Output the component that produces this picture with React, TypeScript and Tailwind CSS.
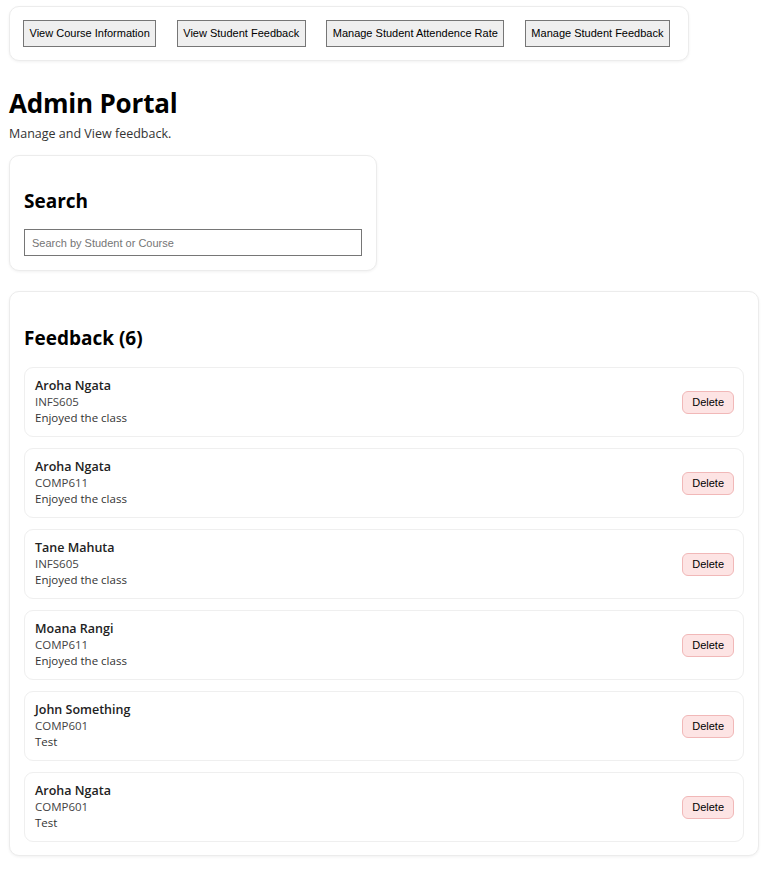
const navItems = [
  "View Course Information",
  "View Student Feedback",
  "Manage Student Attendence Rate",
  "Manage Student Feedback",
];

const feedback = [
  { name: "Aroha Ngata", course: "INFS605", text: "Enjoyed the class" },
  { name: "Aroha Ngata", course: "COMP611", text: "Enjoyed the class" },
  { name: "Tane Mahuta", course: "INFS605", text: "Enjoyed the class" },
  { name: "Moana Rangi", course: "COMP611", text: "Enjoyed the class" },
  { name: "John Something", course: "COMP601", text: "Test" },
  { name: "Aroha Ngata", course: "COMP601", text: "Test" },
];

export default function App() {
  return (
    <div className="min-h-[878px] bg-white pl-[9px] pr-[12px] pt-[6px] pb-4 text-black font-['Open_Sans',sans-serif]">
      <nav className="inline-flex gap-[20.5px] rounded-[10px] border border-[#ececec] bg-white pl-[13px] pr-[18px] py-[13px] shadow-[0_1px_3px_rgba(0,0,0,0.06)]">
        {navItems.map((item) => (
          <button
            key={item}
            className="h-[27px] border border-[#767676] bg-[#efefef] px-[5.5px] text-[11px] leading-none font-['Liberation_Sans',Arial,sans-serif] text-black"
          >
            {item}
          </button>
        ))}
      </nav>

      <h1 className="mt-[24px] text-[26px] font-bold leading-[36px] tracking-[-0.2px]">Admin Portal</h1>
      <p className="mt-[4px] text-[12.5px] leading-[18px] text-[#333]">Manage and View feedback.</p>

      <section className="mt-[12px] w-[368px] rounded-[10px] border border-[#ececec] bg-white px-[14px] pt-[32px] pb-[14px] shadow-[0_1px_3px_rgba(0,0,0,0.06)]">
        <h2 className="text-[19px] font-bold leading-[26px]">Search</h2>
        <input
          placeholder="Search by Student or Course"
          className="mt-[15px] block h-[27px] w-full border border-[#767676] px-[7px] text-[11px] font-['Liberation_Sans',Arial,sans-serif] placeholder:text-[#757575] outline-none"
        />
      </section>

      <section className="mt-[20px] rounded-[10px] border border-[#ececec] bg-white px-[14px] pt-[33px] pb-[13px] shadow-[0_1px_3px_rgba(0,0,0,0.06)]">
        <h2 className="text-[19px] font-bold leading-[26px]">Feedback ({feedback.length})</h2>
        <ul className="mt-[16px] flex flex-col gap-[11px]">
          {feedback.map((f, i) => (
            <li
              key={i}
              className="flex h-[70px] items-center justify-between rounded-[9px] border border-[#efefef] pl-[10px] pr-[9px]"
            >
              <div className="flex flex-col">
                <span className="text-[12.5px] font-semibold leading-[16px] text-[#222]">{f.name}</span>
                <span className="text-[11.5px] leading-[16px] text-[#444]">{f.course}</span>
                <span className="text-[11.5px] leading-[16px] text-[#333]">{f.text}</span>
              </div>
              <button className="h-[23px] rounded-[6px] border border-[#f1b8b8] bg-[#fde4e4] px-[9px] text-[11px] font-['Liberation_Sans',Arial,sans-serif] text-black">
                Delete
              </button>
            </li>
          ))}
        </ul>
      </section>
    </div>
  );
}
